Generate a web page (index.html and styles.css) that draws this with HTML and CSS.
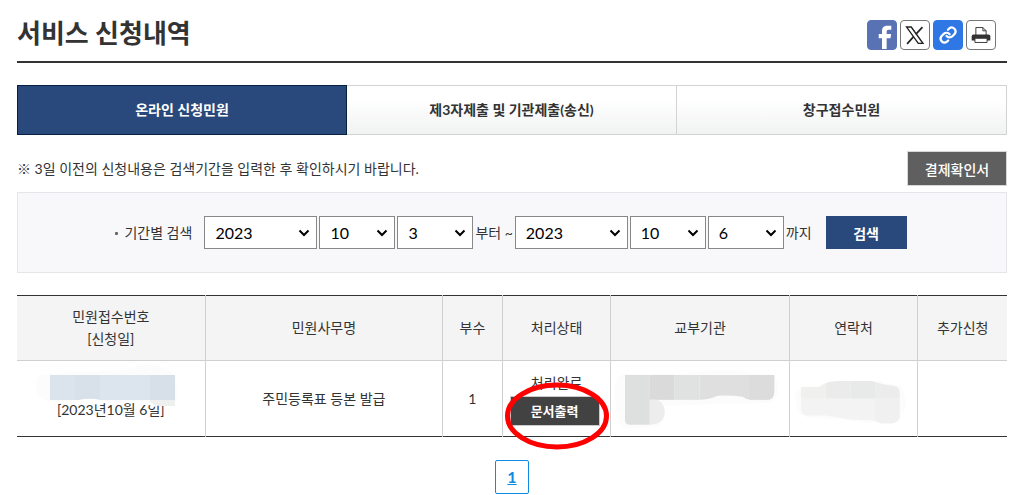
FILE: index.html
```
<!DOCTYPE html>
<html lang="ko">
<head>
	<meta charset="utf-8">
	<meta name="viewport" content="width=device-width, initial-scale=1">
	<title>서비스 신청내역</title>
	<link rel="stylesheet" href="styles.css">
</head>
<body>
<header class="page-head">
	<h1>서비스 신청내역</h1>
	<div class="share">
		<a class="share-btn facebook" href="#" aria-label="페이스북">
			<svg viewBox="0 0 30 30"><path fill="#fff" d="M15 30V18.500h-3.500v-4.500H15v-3.500C15 6.700 17.300 5 20.700 5H25v4.300h-2.700c-1.700 0-2.300.7-2.300 2.200V14h4.800l-.7 4.500H20V30z"/></svg>
		</a>
		<a class="share-btn" href="#" aria-label="X">
			<svg viewBox="0 0 30 30" fill="none" stroke="#222"><path stroke-width="1.500" d="M6 6.500h5l12.500 17.500h-5z"/><path stroke-width="1.800" d="M23 6.500l-7.200 7.800M13.300 17L6.500 24.500"/></svg>
		</a>
		<a class="share-btn link" href="#" aria-label="주소복사">
			<svg viewBox="0 0 30 30"><g transform="translate(5 5) scale(.84)" fill="none" stroke="#fff" stroke-width="2.800" stroke-linecap="round" stroke-linejoin="round"><path d="M10 13a5 5 0 0 0 7.500.5l3-3a5 5 0 0 0-7-7l-1.700 1.700"/><path d="M14 11a5 5 0 0 0-7.500-.5l-3 3a5 5 0 0 0 7 7l1.700-1.700"/></g></svg>
		</a>
		<a class="share-btn" href="#" aria-label="인쇄">
			<svg viewBox="0 0 30 30"><path fill="#fff" stroke="#333" d="M9.500 15V7H17l3.500 3.500V15"/><path fill="none" stroke="#333" d="M17 7v3.500h3.500"/><path fill="#333" d="M7 14.500h16a2 2 0 0 1 2 2V21H5v-4.500a2 2 0 0 1 2-2z"/><path fill="#fff" stroke="#333" d="M8.500 18.500h13V23h-13z"/></svg>
		</a>
	</div>
</header>

<nav class="tabs">
	<a class="tab on" href="#">온라인 신청민원</a>
	<a class="tab" href="#">제3자제출 및 기관제출(송신)</a>
	<a class="tab" href="#">창구접수민원</a>
</nav>

<div class="notice">
	<p>※ 3일 이전의 신청내용은 검색기간을 입력한 후 확인하시기 바랍니다.</p>
	<button type="button" class="btn-receipt">결제확인서</button>
</div>

<form class="search">
	<label class="search-label" for="fromYear">기간별 검색</label>
	<select id="fromYear" class="year"><option>2023</option></select>
	<select aria-label="시작 월"><option>10</option></select>
	<select aria-label="시작 일"><option>3</option></select>
	<span>부터 ~</span>
	<select class="year" aria-label="종료 년"><option>2023</option></select>
	<select aria-label="종료 월"><option>10</option></select>
	<select aria-label="종료 일"><option>6</option></select>
	<span>까지</span>
	<button type="button" class="btn-search">검색</button>
</form>

<table class="list">
	<colgroup>
		<col class="w19"><col class="w24"><col class="w6"><col class="w11"><col class="w18"><col class="w13"><col class="w9">
	</colgroup>
	<thead>
		<tr>
			<th>민원접수번호<br>[신청일]</th>
			<th>민원사무명</th>
			<th>부수</th>
			<th>처리상태</th>
			<th>교부기관</th>
			<th>연락처</th>
			<th>추가신청</th>
		</tr>
	</thead>
	<tbody>
		<tr>
			<td class="receipt">
				<span class="date">[2023년10월 6일]</span>
				<svg class="mask-no" viewBox="0 0 150 46">
					<path fill="#fcfcfc" d="M2 20C2 12 6 9 16 9C45 6 72 7 96 4C108-2 124-1 132 4C140 8 143 14 143 22V36C133 40 126 38 120 42L110 38C85 34 65 39 40 36C20 38 4 36 2 27z"/>
					<path fill="#eeefef" d="M116 35h25v6h-14q-6 0-11-4z"/>
					<path fill="#dbe3ec" d="M16 10h50v25H16z"/>
					<path fill="#d8e0ea" d="M41 10h25v25H41z"/>
					<path fill="#dce4ee" d="M66 10h50v25H66z"/>
					<path fill="#d7dfe9" d="M116 10h25v25h-25z"/>
					<path fill="#fff" d="M40 36q16-4 26-1q12 3 25 0l20 1v1H40z"/>
				</svg>
			</td>
			<td>주민등록표 등본 발급</td>
			<td>1</td>
			<td class="status">
				처리완료
				<button type="button" class="btn-print">문서출력</button>
				<svg class="mark" viewBox="0 0 106 70"><ellipse cx="53" cy="35" rx="49.500" ry="31" fill="none" stroke="#f00" stroke-width="5"/></svg>
			</td>
			<td class="masked org">
				<svg viewBox="0 0 170 60">
					<path fill="#fcfcfc" d="M2 14Q2 5 12 4h60q16-4 40-4t30 4h16q8 3 8 14t-8 15L50 36q4 20-8 21L16 59Q5 58 5 44Q1 36 2 20z"/>
					<path fill="#dedfdf" d="M12 5h25v50H17q-5 0-5-5z"/>
					<path fill="#dadada" d="M37 5h25v25H37z"/>
					<path fill="#dfe2e1" d="M62 5h25v25H62z"/>
					<path fill="#dfdfdf" d="M87 5h75v17q0 8-8 8h-15q-5 0-9-3q-14-2-25-1q-8 4-18 4z"/>
					<path fill="#dcdcdc" d="M137 5h25v17q0 8-8 8h-17z"/>
					<path fill="#ededed" d="M37 30h7q8 3 8 12t-8 12l-7 1z"/>
				</svg>
			</td>
			<td class="masked tel">
				<svg viewBox="0 0 116 48">
					<path fill="#fcfcfc" d="M2 16Q4 9 15 8h18q4-6 15-6h40q9 4 20 4q6 8 6 18t-7 14q-4 6-12 6H70l-20-3-35-2Q4 37 3 26z"/>
					<path fill="#f0f0ef" d="M8 8h18l7-4v16H8z"/>
					<path fill="#ebebeb" d="M33 4q5-2 12-2h13v18H33z"/>
					<path fill="#e8e9e9" d="M58 2h22l3 1v17H58z"/>
					<path fill="#ececec" d="M83 3l12 3q13 0 13 7v7H83z"/>
					<path fill="#f3f3f3" d="M8 20h75v22l-25-1-25-4H14q-6-1-6-7z"/>
					<path fill="#f0f0f0" d="M83 20h25v20q-3 5-10 5h-9l-6-3z"/>
				</svg>
			</td>
			<td></td>
		</tr>
	</tbody>
</table>

<div class="paging">
	<a class="page-no" href="#">1</a>
</div>
</body>
</html>
```

FILE: styles.css
```
* {
	box-sizing: border-box;
}
body {
	margin: 0;
	padding: 0 11px 0 17px;
	background: #fff;
	color: #333;
	font-family: Lato, "Noto Sans CJK KR", sans-serif;
	font-size: 14px;
	line-height: 22px;
}
button, select {
	font-family: inherit;
}
a {
	color: inherit;
	text-decoration: none;
}
.page-head {
	display: flex;
	justify-content: space-between;
	padding: 20px 11px 11px 0;
	border-bottom: 2px solid #333;
}
h1 {
	margin: 0;
	font-size: 26px;
	line-height: 26px;
}
.share {
	display: flex;
	gap: 3px;
}
.share-btn {
	width: 30px;
	height: 30px;
	border: 1px solid #777;
	border-radius: 4px;
	overflow: hidden;
}
.share-btn svg {
	display: block;
	width: 100%;
}
.share-btn.facebook {
	background: #5872b3;
	border-color: #5872b3;
}
.share-btn.link {
	background: #2f77e4;
	border-color: #2f77e4;
}

/* tabs */
.tabs {
	display: grid;
	grid-template-columns: repeat(3, 1fr);
	margin-top: 22px;
}
.tab {
	height: 50px;
	line-height: 48px;
	text-align: center;
	font-weight: bold;
	border: 1px solid #d3d3d3;
	border-left: 0;
	background: linear-gradient(#fff 30%, #f1f2f2);
}
.tab.on {
	color: #fff;
	background: #29497c;
	border: 1px solid #05213f;
}

.notice {
	display: flex;
	justify-content: space-between;
	align-items: center;
	margin: 16px 0 6px;
}
.notice p {
	margin: 0;
}
.btn-receipt {
	width: 100px;
	height: 35px;
	padding: 0;
	border: 1px solid #d8d8d8;
	background: #5f5f5f;
	color: #fff;
	font-size: 14px;
	font-weight: 500;
}

/* search */
.search {
	display: flex;
	justify-content: center;
	align-items: center;
	gap: 2px;
	padding: 23px 2px 23px 0;
	background: #f8f8fb;
	border: 1px solid #e6e6ea;
}
.search-label {
	margin-right: 10px;
}
.search-label::before {
	content: "";
	display: inline-block;
	width: 3px;
	height: 3px;
	margin-right: 6px;
	border-radius: 1px;
	background: #666;
	vertical-align: middle;
}
.search select {
	width: 76px;
	height: 33px;
	padding: 0 20px 0 10px;
	border: 1px solid #888;
	border-radius: 0;
	appearance: none;
	background: #fff url("data:image/svg+xml,%3Csvg xmlns='http://www.w3.org/2000/svg' width='12' height='8'%3E%3Cpath d='M1.5 1.500L6 6l4.500-4.500' fill='none' stroke='black' stroke-width='2'/%3E%3C/svg%3E") no-repeat right 6px center;
	color: #000;
	font-size: 16px;
}
.search select.year {
	width: 113px;
}
.btn-search {
	width: 81px;
	height: 33px;
	margin-left: 12px;
	padding: 0;
	border: 0;
	background: #29497c;
	color: #fff;
	font-size: 14px;
	font-weight: bold;
}

/* list */
.list {
	width: 100%;
	margin-top: 22px;
	table-layout: fixed;
	border-collapse: collapse;
	border-top: 1px solid #333;
	border-bottom: 1px solid #333;
	text-align: center;
}
.list th, .list td {
	position: relative;
	padding: 0;
	border-left: 1px solid #d0d0d0;
}
.list th:first-child, .list td:first-child {
	border-left: 0;
}
.list th {
	height: 65px;
	font-weight: normal;
	background: #f4f4f4;
	border-bottom: 1px solid #d0d0d0;
}
.list td {
	height: 76px;
}
.w19 { width: 19%; }
.w24 { width: 24%; }
.w6 { width: 6%; }
.w11 { width: 11%; }
.w18 { width: 18%; }
.w13 { width: 13%; }
.w9 { width: 9%; }
.list .receipt {
	padding-top: 22px;
}
.mask-no {
	position: absolute;
	left: 17px;
	top: 4px;
	width: 150px;
}
.masked svg {
	display: block;
	width: 100%;
}
.list .org {
	padding: 2px 6px 0 2px;
}
.list .tel {
	padding: 8px 10px 0 3px;
}
.btn-print {
	display: block;
	width: 90px;
	height: 30px;
	margin: 2px 0 0 7px;
	padding: 0;
	border: 1px solid #ccc;
	background: #424242;
	color: #fff;
	font-size: 13px;
	font-weight: bold;
}
.mark {
	position: absolute;
	left: 1px;
	top: 20px;
	width: 106px;
}

.paging {
	display: flex;
	justify-content: center;
	margin-top: 23px;
}
.page-no {
	width: 34px;
	height: 34px;
	line-height: 32px;
	border: 1px solid #0f8be3;
	border-radius: 2px;
	color: #0f8be3;
	font-size: 16px;
	font-weight: bold;
	text-align: center;
	text-decoration: underline;
}
```
